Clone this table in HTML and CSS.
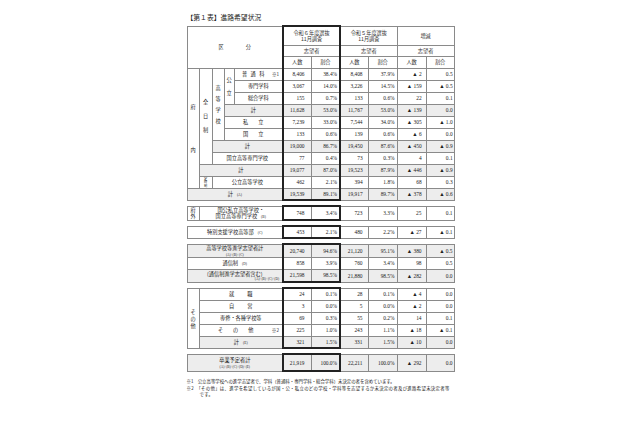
FILE: index.html
```html
<!DOCTYPE html>
<html lang="ja">
<head>
<meta charset="utf-8">
<link rel="stylesheet" href="styles.css">
</head>
<body>
<div class="page">
  <h1 class="title">【第１表】進路希望状況</h1>

  <table class="tbl">
    <colgroup>
      <col class="c1"><col class="c2"><col class="c3"><col class="c4"><col class="c5">
      <col class="d1"><col class="d2"><col class="d3"><col class="d4"><col class="d5"><col class="d6">
    </colgroup>
    <thead>
      <tr class="h1">
        <th colspan="5" rowspan="3" class="kubun"><span class="kb-txt">区分</span></th>
        <th colspan="2" class="kl kr kt">令和６年度選抜<br>11月調査</th>
        <th colspan="2">令和５年度選抜<br>11月調査</th>
        <th colspan="2">増減</th>
      </tr>
      <tr class="h2">
        <th colspan="2" class="kl kr">志望者</th>
        <th colspan="2">志望者</th>
        <th colspan="2">志望者</th>
      </tr>
      <tr class="h3">
        <th class="kl">人数</th><th class="kr">割合</th>
        <th>人数</th><th>割合</th><th>人数</th><th>割合</th>
      </tr>
    </thead>
    <tbody>
      <tr class="r">
        <td rowspan="10" class="v"><span class="vt vt-funai">府<br>内</span></td>
        <td rowspan="8" class="v"><span class="vt vt-zen">全<br>日<br>制</span></td>
        <td rowspan="6" class="v"><span class="vt vt-kou">高<br>等<br>学<br>校</span></td>
        <td rowspan="3" class="v"><span class="vt vt-ko">公<br>立</span></td>
        <td class="lbl"><span class="note">※1</span><span class="sp4">普通科</span></td>
        <td class="n1">8,406</td><td class="p1">38.4%</td><td class="n2">8,408</td><td class="p2">37.9%</td><td class="n3">▲ 2</td><td class="p3">0.5</td>
      </tr>
      <tr class="r">
        <td class="lbl">専門学科</td>
        <td class="n1">3,067</td><td class="p1">14.0%</td><td class="n2">3,226</td><td class="p2">14.5%</td><td class="n3">▲ 159</td><td class="p3">▲ 0.5</td>
      </tr>
      <tr class="r">
        <td class="lbl">総合学科</td>
        <td class="n1">155</td><td class="p1">0.7%</td><td class="n2">133</td><td class="p2">0.6%</td><td class="n3">22</td><td class="p3">0.1</td>
      </tr>
      <tr class="r g">
        <td colspan="2" class="lbl">計</td>
        <td class="n1">11,628</td><td class="p1">53.0%</td><td class="n2">11,767</td><td class="p2">53.0%</td><td class="n3">▲ 139</td><td class="p3">0.0</td>
      </tr>
      <tr class="r">
        <td colspan="2" class="lbl"><span class="sp10">私立</span></td>
        <td class="n1">7,239</td><td class="p1">33.0%</td><td class="n2">7,544</td><td class="p2">34.0%</td><td class="n3">▲ 305</td><td class="p3">▲ 1.0</td>
      </tr>
      <tr class="r">
        <td colspan="2" class="lbl"><span class="sp10">国立</span></td>
        <td class="n1">133</td><td class="p1">0.6%</td><td class="n2">139</td><td class="p2">0.6%</td><td class="n3">▲ 6</td><td class="p3">0.0</td>
      </tr>
      <tr class="r g">
        <td colspan="3" class="lbl">計</td>
        <td class="n1">19,000</td><td class="p1">86.7%</td><td class="n2">19,450</td><td class="p2">87.6%</td><td class="n3">▲ 450</td><td class="p3">▲ 0.9</td>
      </tr>
      <tr class="r">
        <td colspan="3" class="lbl">国立高等専門学校</td>
        <td class="n1">77</td><td class="p1">0.4%</td><td class="n2">73</td><td class="p2">0.3%</td><td class="n3">4</td><td class="p3">0.1</td>
      </tr>
      <tr class="r g">
        <td colspan="4" class="lbl">計</td>
        <td class="n1">19,077</td><td class="p1">87.0%</td><td class="n2">19,523</td><td class="p2">87.9%</td><td class="n3">▲ 446</td><td class="p3">▲ 0.9</td>
      </tr>
      <tr class="r">
        <td class="v"><span class="vt vt-tei">定<br>時<br>制</span></td>
        <td colspan="3" class="lbl">公立高等学校</td>
        <td class="n1">462</td><td class="p1">2.1%</td><td class="n2">394</td><td class="p2">1.8%</td><td class="n3">68</td><td class="p3">0.3</td>
      </tr>
      <tr class="r g">
        <td colspan="5" class="lbl">計<span class="tag">(A)</span></td>
        <td class="n1 kb">19,539</td><td class="p1 kb">89.1%</td><td class="n2">19,917</td><td class="p2">89.7%</td><td class="n3">▲ 378</td><td class="p3">▲ 0.6</td>
      </tr>
    </tbody>
  </table>

  <table class="tbl box-b">
    <colgroup>
      <col class="c1"><col class="c2"><col class="c3"><col class="c4"><col class="c5">
      <col class="d1"><col class="d2"><col class="d3"><col class="d4"><col class="d5"><col class="d6">
    </colgroup>
    <tr class="r2">
      <td class="v"><span class="vt vt-fugai">府<br>外</span></td>
      <td colspan="4" class="lbl">国公私立高等学校・<br>国立高等専門学校<span class="tag">(B)</span></td>
      <td class="n1 kt kb">748</td><td class="p1 kt kb">3.4%</td><td class="n2">723</td><td class="p2">3.3%</td><td class="n3">25</td><td class="p3">0.1</td>
    </tr>
  </table>

  <table class="tbl box-c">
    <colgroup>
      <col class="c1"><col class="c2"><col class="c3"><col class="c4"><col class="c5">
      <col class="d1"><col class="d2"><col class="d3"><col class="d4"><col class="d5"><col class="d6">
    </colgroup>
    <tr class="r">
      <td colspan="5" class="lbl">特別支援学校高等部<span class="tag">(C)</span></td>
      <td class="n1 kt kb">453</td><td class="p1 kt kb">2.1%</td><td class="n2">480</td><td class="p2">2.2%</td><td class="n3">▲ 27</td><td class="p3">▲ 0.1</td>
    </tr>
  </table>

  <table class="tbl box-d">
    <colgroup>
      <col class="c1"><col class="c2"><col class="c3"><col class="c4"><col class="c5">
      <col class="d1"><col class="d2"><col class="d3"><col class="d4"><col class="d5"><col class="d6">
    </colgroup>
    <tr class="r3 g">
      <td colspan="5" class="lbl">高等学校等進学志望者計<br><span class="formula">(A)+(B)+(C)</span></td>
      <td class="n1 kt">20,740</td><td class="p1 kt">94.6%</td><td class="n2">21,120</td><td class="p2">95.1%</td><td class="n3">▲ 380</td><td class="p3">▲ 0.5</td>
    </tr>
    <tr class="r">
      <td colspan="5" class="lbl">通信制<span class="tag">(D)</span></td>
      <td class="n1">858</td><td class="p1">3.9%</td><td class="n2">760</td><td class="p2">3.4%</td><td class="n3">98</td><td class="p3">0.5</td>
    </tr>
    <tr class="r3 g">
      <td colspan="5" class="lbl lbl-wide">(通信制進学志望者含む)<br><span class="formula fr">(A)+(B)+(C)+(D)</span></td>
      <td class="n1 kb">21,598</td><td class="p1 kb">98.5%</td><td class="n2">21,880</td><td class="p2">98.5%</td><td class="n3">▲ 282</td><td class="p3">0.0</td>
    </tr>
  </table>

  <table class="tbl box-e">
    <colgroup>
      <col class="c1"><col class="c2"><col class="c3"><col class="c4"><col class="c5">
      <col class="d1"><col class="d2"><col class="d3"><col class="d4"><col class="d5"><col class="d6">
    </colgroup>
    <tr class="r">
      <td rowspan="5" class="v"><span class="vt vt-sono">そ<br>の<br>他</span></td>
      <td colspan="4" class="lbl"><span class="sp14">就職</span></td>
      <td class="n1 kt">24</td><td class="p1 kt">0.1%</td><td class="n2">28</td><td class="p2">0.1%</td><td class="n3">▲ 4</td><td class="p3">0.0</td>
    </tr>
    <tr class="r">
      <td colspan="4" class="lbl"><span class="sp14">自営</span></td>
      <td class="n1">3</td><td class="p1">0.0%</td><td class="n2">5</td><td class="p2">0.0%</td><td class="n3">▲ 2</td><td class="p3">0.0</td>
    </tr>
    <tr class="r">
      <td colspan="4" class="lbl">専修・各種学校等</td>
      <td class="n1">69</td><td class="p1">0.3%</td><td class="n2">55</td><td class="p2">0.2%</td><td class="n3">14</td><td class="p3">0.1</td>
    </tr>
    <tr class="r">
      <td colspan="4" class="lbl"><span class="note">※2</span><span class="sp10">その他</span></td>
      <td class="n1">225</td><td class="p1">1.0%</td><td class="n2">243</td><td class="p2">1.1%</td><td class="n3">▲ 18</td><td class="p3">▲ 0.1</td>
    </tr>
    <tr class="r g">
      <td colspan="4" class="lbl">計<span class="tag">(E)</span></td>
      <td class="n1 kb">321</td><td class="p1 kb">1.5%</td><td class="n2">331</td><td class="p2">1.5%</td><td class="n3">▲ 10</td><td class="p3">0.0</td>
    </tr>
  </table>

  <table class="tbl box-f">
    <colgroup>
      <col class="c1"><col class="c2"><col class="c3"><col class="c4"><col class="c5">
      <col class="d1"><col class="d2"><col class="d3"><col class="d4"><col class="d5"><col class="d6">
    </colgroup>
    <tr class="r4 g">
      <td colspan="5" class="lbl">卒業予定者計<br><span class="formula">(A)+(B)+(C)+(D)+(E)</span></td>
      <td class="n1 kt kb">21,919</td><td class="p1 kt kb">100.0%</td><td class="n2">22,211</td><td class="p2">100.0%</td><td class="n3">▲ 292</td><td class="p3">0.0</td>
    </tr>
  </table>

  <div class="notes">
    <p class="nt">※1　公立高等学校への進学志望者で、学科（普通科・専門学科・総合学科）未決定の者を含めています。</p>
    <p class="nt nt2">※2　「その他」は、進学を希望しているが国・公・私立のどの学校・学科等を志望するか未決定の者及び進路希望未決定者等です。</p>
  </div>
</div>
</body>
</html>
```

FILE: styles.css
```css
* { box-sizing: border-box; }

html, body {
  margin: 0;
  background: #ffffff;
}

body {
  color: #222;
  font-family: "Noto Sans CJK JP", sans-serif;
}

.page {
  width: 267px;
  margin: 0 auto;
  padding-top: 12px;
}

.title {
  margin: 0 0 3px;
  font-size: 6.8px;
  line-height: 10px;
  font-weight: normal;
  color: #222;
}

.tbl {
  width: 267px;
  table-layout: fixed;
  border-collapse: collapse;
  font-size: 5.2px;
  line-height: 6px;
  margin-bottom: 4px;
}

.c1, .c2, .c3 { width: 12px; }
.c2 { width: 13px; }
.c4 { width: 10px; }
.c5 { width: 49px; }
.d1, .d3, .d6 { width: 28px; }
.d2, .d4, .d5 { width: 29px; }

.tbl th,
.tbl td {
  border: 1px solid #8a8a8a;
  padding: 0;
  font-weight: normal;
  text-align: center;
  vertical-align: middle;
  overflow: hidden;
  white-space: nowrap;
}

.tbl th { color: #333; }

.h1 th { height: 19px; }
.h2 th { height: 11px; }
.h3 th { height: 12px; }

.r td { height: 12px; }
.r2 td { height: 14px; }
.r3 td { height: 13px; }
.r4 td { height: 17px; }

.g td { background: #ededed; }

.kl { border-left: 2px solid #222 !important; }
.kr { border-right: 2px solid #222 !important; }
.kt { border-top: 2px solid #222 !important; }
.kb { border-bottom: 2px solid #222 !important; }

.n1 { border-left: 2px solid #222 !important; }
.p1 { border-right: 2px solid #222 !important; }

.n1, .p1, .n2, .p2, .n3, .p3 {
  text-align: right !important;
  font-family: "Liberation Serif", "DejaVu Serif", serif;
  font-size: 5.4px;
}

.n1 { padding-right: 6px !important; }
.p1 { padding-right: 2px !important; }
.n2 { padding-right: 5px !important; }
.p2 { padding-right: 2px !important; }
.n3 { padding-right: 4px !important; }
.p3 { padding-right: 1px !important; }

.kubun .kb-txt { letter-spacing: 22px; margin-right: -22px; }

.v { background: #fff; }
.vt { display: block; }
.vt-funai { line-height: 43px; }
.vt-zen { line-height: 14px; }
.vt-kou { line-height: 11px; }
.vt-ko { line-height: 13px; }
.vt-tei { font-size: 3.2px; line-height: 3.6px; }
.vt-fugai { line-height: 6px; }
.vt-sono { line-height: 7px; }

.lbl { color: #222; }

.note {
  float: right;
  margin-right: 3px;
  font-size: 4.6px;
}

.sp4 { letter-spacing: 3.5px; margin-right: -3.5px; }
.sp10 { letter-spacing: 10px; margin-right: -10px; }
.sp14 { letter-spacing: 13px; margin-right: -13px; }

.tag {
  font-family: "Liberation Serif", serif;
  font-size: 3.6px;
  margin-left: 4px;
}

.formula {
  font-family: "Liberation Serif", serif;
  font-size: 3.4px;
  line-height: 4px;
}

.lbl-wide { text-align: center; }
.fr { display: block; text-align: right; padding-right: 3px; }

.notes {
  margin-top: 6px;
  font-size: 4.4px;
  line-height: 6.5px;
  color: #222;
}

.nt {
  margin: 0;
  padding-left: 13px;
  text-indent: -13px;
}

.nt2 { letter-spacing: 0.3px; }
```
